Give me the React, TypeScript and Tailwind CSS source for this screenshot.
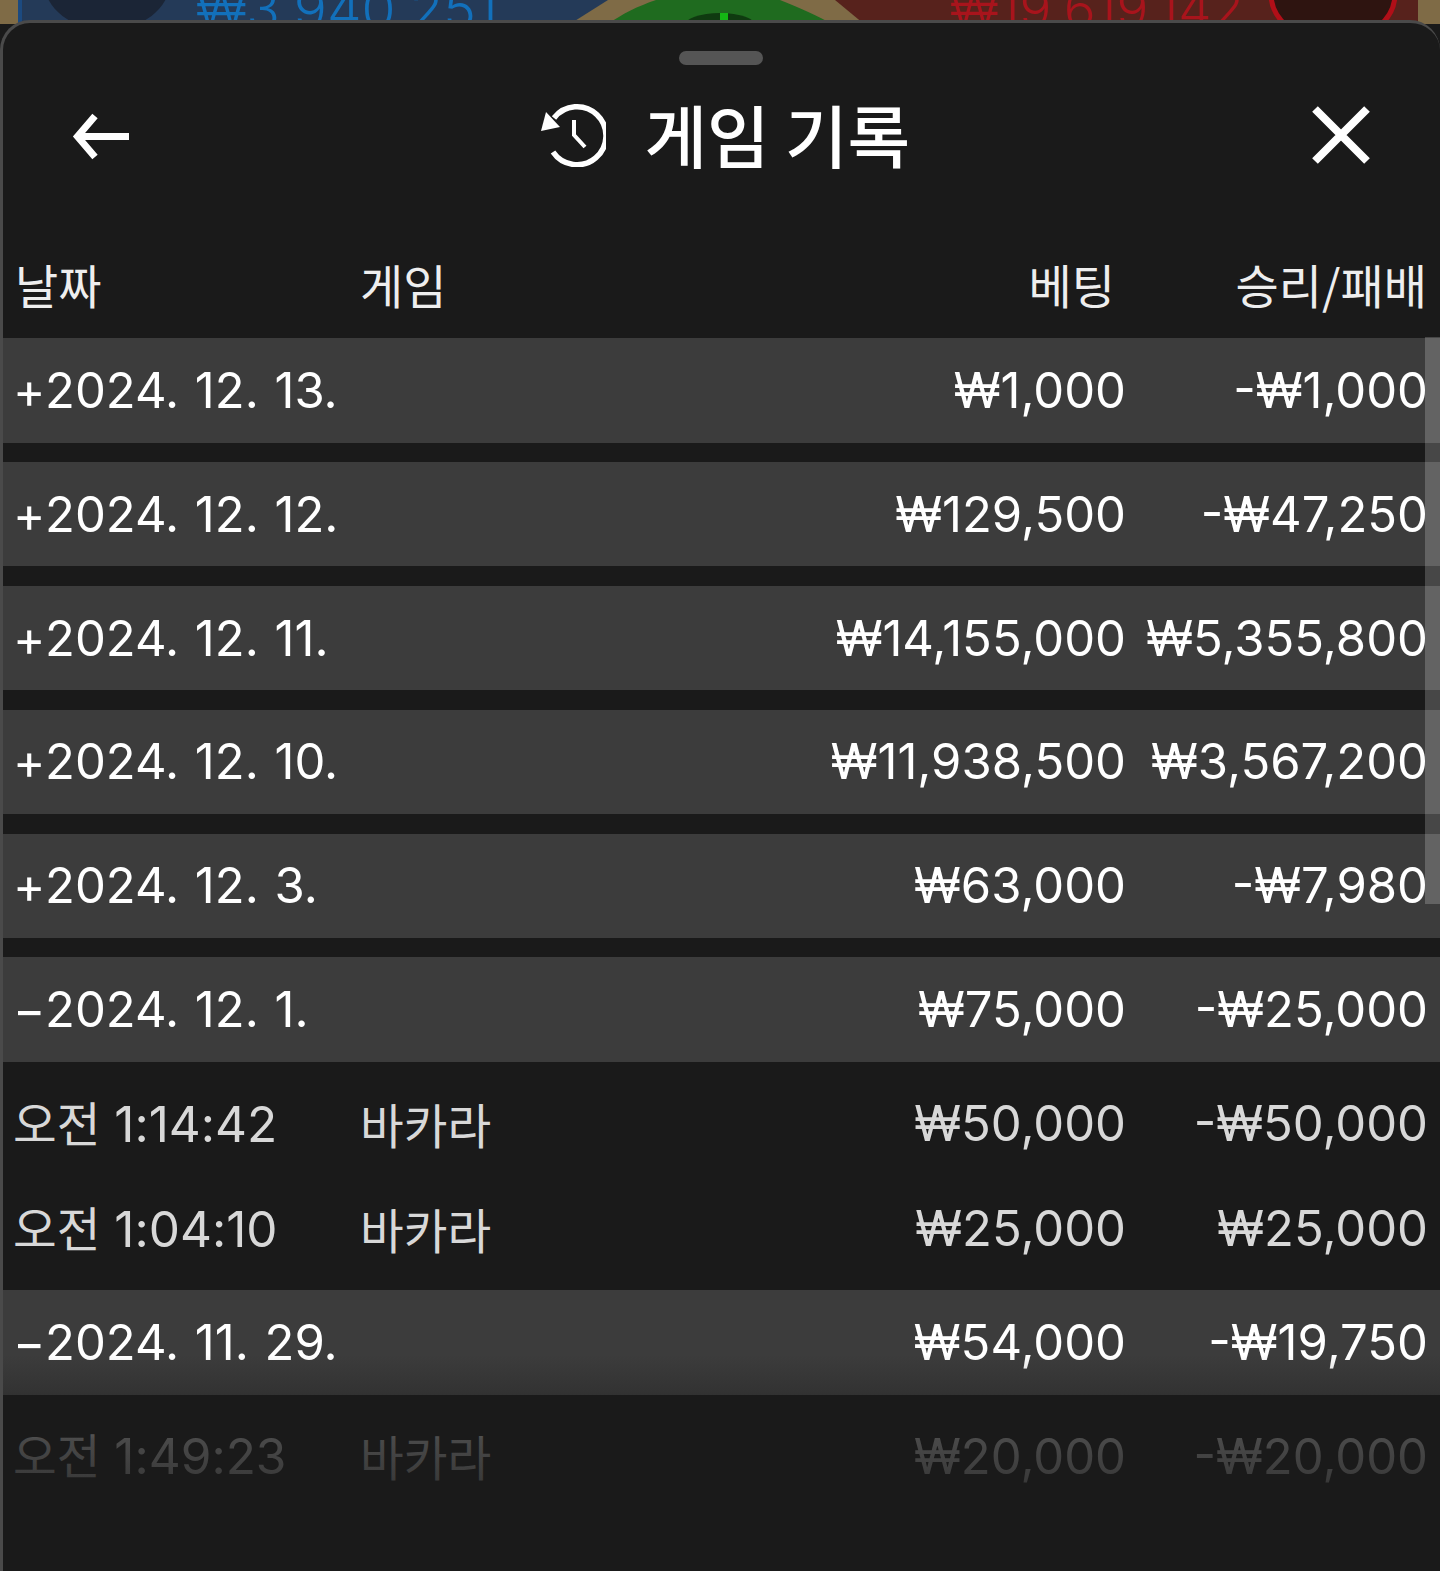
const font = { fontFamily: 'Inter, "Noto Sans CJK KR", sans-serif' };
const korean = { fontFamily: '"Noto Sans CJK KR", sans-serif' };

type Row = { kind: 'day' | 'item'; sign?: string; a: string; b?: string; bet: string; win: string };

const rows: Row[] = [
  { kind: 'day', sign: '+', a: '2024. 12. 13.', bet: '₩1,000', win: '-₩1,000' },
  { kind: 'day', sign: '+', a: '2024. 12. 12.', bet: '₩129,500', win: '-₩47,250' },
  { kind: 'day', sign: '+', a: '2024. 12. 11.', bet: '₩14,155,000', win: '₩5,355,800' },
  { kind: 'day', sign: '+', a: '2024. 12. 10.', bet: '₩11,938,500', win: '₩3,567,200' },
  { kind: 'day', sign: '+', a: '2024. 12. 3.', bet: '₩63,000', win: '-₩7,980' },
  { kind: 'day', sign: '−', a: '2024. 12. 1.', bet: '₩75,000', win: '-₩25,000' },
  { kind: 'item', a: '1:14:42', b: '바카라', bet: '₩50,000', win: '-₩50,000' },
  { kind: 'item', a: '1:04:10', b: '바카라', bet: '₩25,000', win: '₩25,000' },
  { kind: 'day', sign: '−', a: '2024. 11. 29.', bet: '₩54,000', win: '-₩19,750' },
  { kind: 'item', a: '1:49:23', b: '바카라', bet: '₩20,000', win: '-₩20,000' },
];

function Grouped() {
  const out: React.ReactNode[] = [];
  let i = 0;
  while (i < rows.length) {
    const r = rows[i];
    if (r.kind === 'day') {
      const next = rows[i + 1];
      const isLastBeforeGap = next && next.kind === 'day';
      out.push(
        <div
          key={i}
          className={`grid h-[104.6px] grid-cols-[347px_1fr_302px] items-center bg-[#3c3c3c] pl-[10px] pr-[12px] text-[49px] leading-none text-white ${isLastBeforeGap ? 'mb-[19.3px]' : ''}`}
        >
          <div className="whitespace-nowrap [word-spacing:2px]">
            <span className="inline-block w-[32px]">{r.sign}</span>
            {r.a}
          </div>
          <div className="text-right">{r.bet}</div>
          <div className="text-right">{r.win}</div>
        </div>,
      );
      i += 1;
    } else {
      const items: Row[] = [];
      while (i < rows.length && rows[i].kind === 'item') {
        items.push(rows[i]);
        i += 1;
      }
      out.push(
        <div key={i} className="py-[9px]">
          {items.map((it) => (
            <div
              key={it.a}
              className="grid h-[105px] grid-cols-[347px_1fr_302px] items-center pl-[10px] pr-[12px] text-[49.5px] leading-none text-[#d8d8d8]"
            >
              <div className="whitespace-nowrap">
                <span className="text-[47.5px]" style={korean}>오전</span> {it.a}
              </div>
              <div className="flex items-center justify-between">
                <span className="text-[47.5px]" style={korean}>{it.b}</span>
                <span className="text-[49px]">{it.bet}</span>
              </div>
              <div className="text-right text-[49px]">{it.win}</div>
            </div>
          ))}
        </div>,
      );
    }
  }
  return <>{out}</>;
}

function Backdrop() {
  return (
    <div className="relative h-[24px] overflow-hidden bg-[#7f6b46]" style={font}>
      <svg className="absolute inset-0" width="1440" height="24" viewBox="0 0 1440 24">
        <polygon points="18,0 608,0 570,24 18,24" fill="#243a58" />
        <rect x="18" y="0" width="4" height="24" fill="#1c4a80" />
        <ellipse cx="107" cy="-18" rx="63" ry="48" fill="#1b2536" />
        <path d="M656 0H780C800 8 818 16 832 24H608C622 14 638 6 656 0Z" fill="#1f6b1f" />
        <ellipse cx="720" cy="26" rx="36" ry="13" fill="#0f3a10" />
        <rect x="720" y="13" width="8" height="11" fill="#14b814" />
        <polygon points="835,0 1418,0 1418,24 864,24" fill="#57221c" />
        <ellipse cx="1333" cy="-6" rx="62" ry="48" fill="#2e1410" stroke="#b00f18" strokeWidth="5" />
      </svg>
      <div className="absolute left-[196px] top-[-19px] whitespace-nowrap text-[55px] font-light leading-[56px] text-[#1270bb]">₩3,940,251</div>
      <div className="absolute left-[950px] top-[-19px] whitespace-nowrap text-[53px] font-light leading-[56px] text-[#a8141c]">₩19,619,142</div>
    </div>
  );
}

export default function App() {
  return (
    <div className="relative h-[1571px] w-[1440px] overflow-hidden bg-[#1a1a1a]" style={font}>
      <Backdrop />
      <div className="absolute inset-x-0 bottom-0 top-[20px] overflow-hidden rounded-t-[30px] border-l-[3px] border-t-[3px] border-[#4a4a4a] bg-[#1a1a1a]">
        <div className="flex justify-center pr-[2px] pt-[28px]">
          <div className="h-[14px] w-[84px] rounded-full bg-[#555555]" />
        </div>
        <div className="relative mt-[26px] flex h-[92px] items-center justify-between pl-[68px] pr-[70px]">
          <svg width="60" height="48" viewBox="0 0 60 48" fill="none" stroke="white" strokeWidth="7">
            <path d="M58 23.5H6M24 3L6.5 23.5 24 44" />
          </svg>
          <div className="ml-[5px] flex items-center">
            <svg width="68" height="64" viewBox="0 0 68 64" fill="none" className="mb-[4px] mr-[38.5px]">
              <path d="M16 15A29 29 0 1 1 15 49" stroke="white" strokeWidth="5.5" />
              <path d="M8 9L3 28 22 24Z" fill="white" />
              <path d="M36 17V32L47 44" stroke="white" strokeWidth="4" />
            </svg>
            <span className="mb-[6px] text-[68px] font-medium leading-none text-white" style={korean}>게임 기록</span>
          </div>
          <svg width="58" height="58" viewBox="0 0 58 58" fill="none" stroke="white" strokeWidth="8" className="mt-[-4px]">
            <path d="M3 3L55 55M55 3L3 55" />
          </svg>
        </div>
        <div className="mt-[45px] grid h-[110px] grid-cols-[345px_1fr_302px] items-center pl-[12px] pr-[13px] text-[47px] leading-none text-[#eeeeee]" style={korean}>
          <div>날짜</div>
          <div className="flex justify-between pr-[10px]">
            <span>게임</span>
            <span>베팅</span>
          </div>
          <div className="text-right">승리/패배</div>
        </div>
        <Grouped />
        <div className="pointer-events-none absolute right-0 top-[314px] h-[567px] w-[15px] bg-white/20" />
        <div className="pointer-events-none absolute inset-x-0 bottom-0 h-[216px] bg-[linear-gradient(to_bottom,#1a1a1a00_0px,#1a1a1a45_37px,#1a1a1ac0_85px,#1a1a1ad4_125px,#1a1a1a_155px)]" />
      </div>
    </div>
  );
}
